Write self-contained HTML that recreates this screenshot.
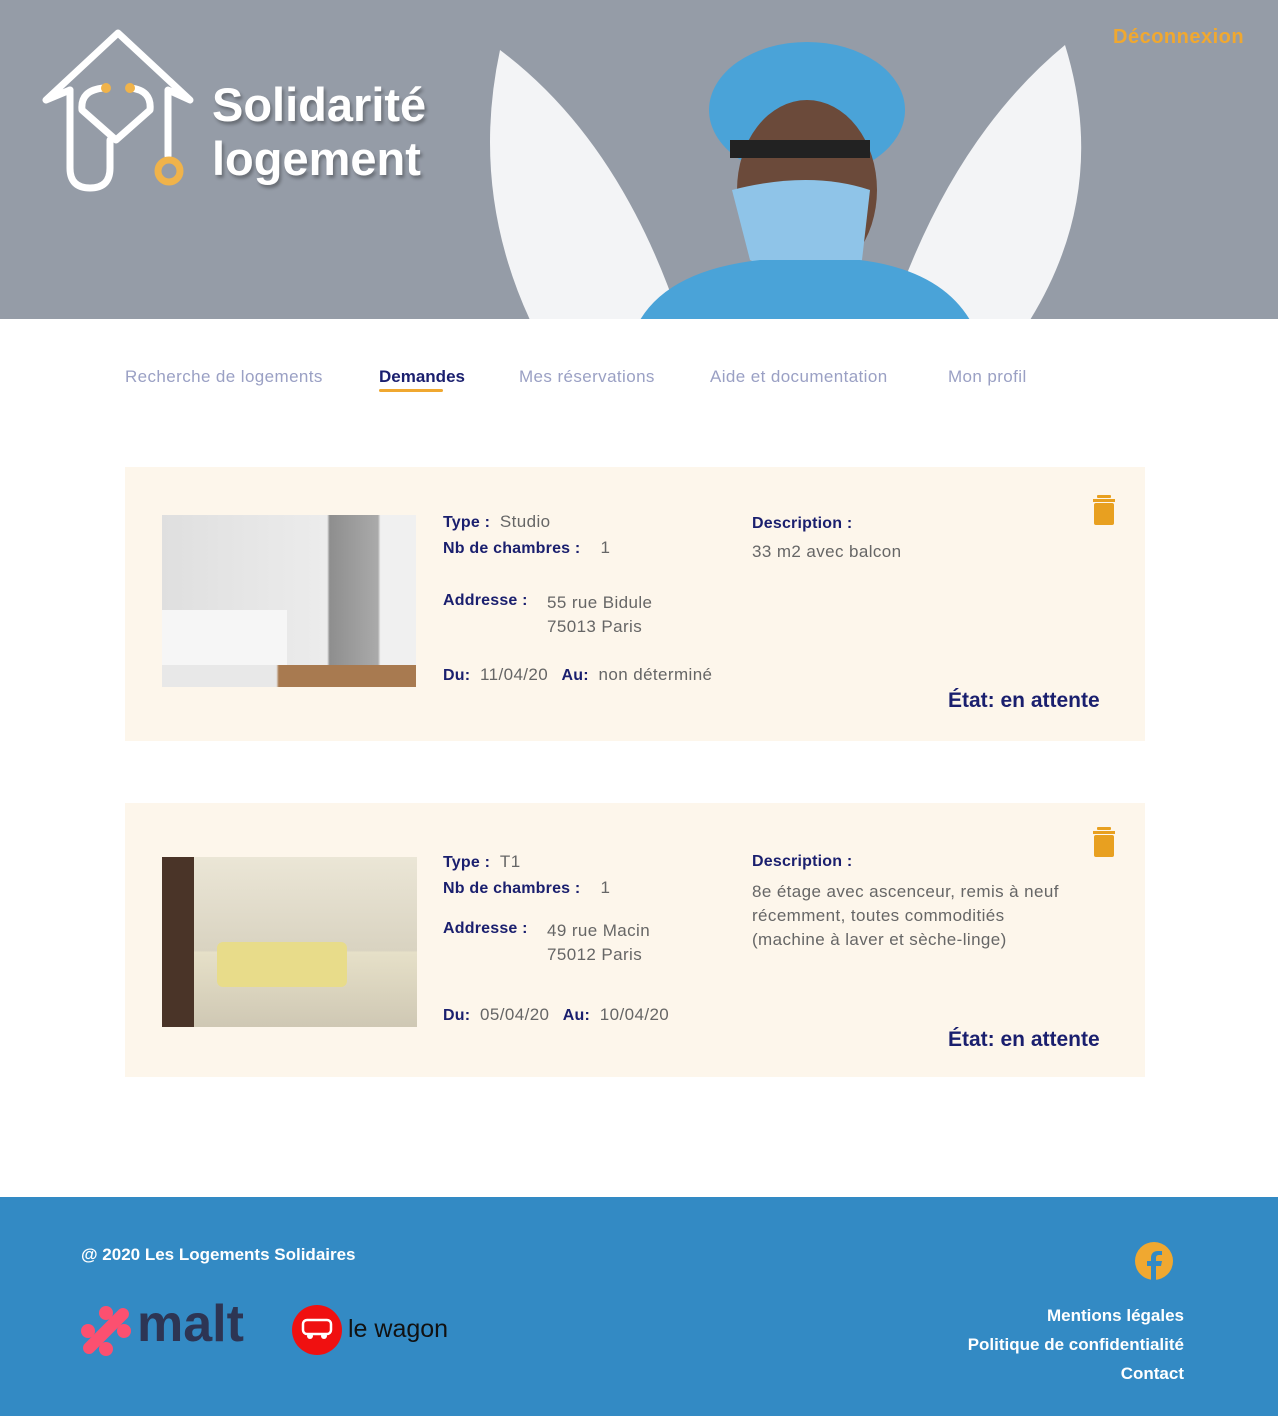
<!DOCTYPE html>
<html><head><meta charset="utf-8"><style>
*{margin:0;padding:0;box-sizing:border-box}
body{width:1278px;height:1416px;position:relative;font-family:"Liberation Sans",sans-serif;background:#fff;overflow:hidden}
.a{position:absolute;white-space:nowrap}
.hdr{position:absolute;left:0;top:0;width:1278px;height:319px;background:#959ca7;overflow:hidden}
.nav{font-size:17px;letter-spacing:0.4px;color:#9aa0c4;top:367px}
.card{position:absolute;left:125px;width:1020px;background:#fdf6eb}
.l{color:#1a1f6e;font-weight:bold;font-size:16px;letter-spacing:0.2px}
.v{color:#666;font-size:17px;font-weight:normal;letter-spacing:0.4px}
.st{color:#1a1f6e;font-weight:bold;font-size:21px}
.trash{position:absolute;width:22px;height:30px}
.ft{position:absolute;left:0;top:1197px;width:1278px;height:219px;background:#338ac4}
.fw{color:#fff;font-weight:bold;font-size:17px}
</style></head><body>
<div class="hdr">
<svg class="a" style="left:40px;top:28px" width="160" height="170" viewBox="0 0 160 170">
<g fill="none" stroke="#fff" stroke-width="7" stroke-linejoin="round" stroke-linecap="round">
<path d="M30 62 L6 72 L78 5 L150 72 L128 62 L128 128"/>
<path d="M30 62 L30 140 Q30 160 50 160 Q70 160 70 140 L70 112"/>
<path d="M64 60 Q40 62 42 82 L76 112 L110 82 Q112 62 90 60"/>
</g>
<circle cx="66" cy="60" r="5" fill="#f0b34a"/><circle cx="90" cy="60" r="5" fill="#f0b34a"/>
<circle cx="129" cy="143" r="11" fill="none" stroke="#f0b34a" stroke-width="7"/>
</svg>
<div class="a" style="left:212px;top:78px;color:#fff;font-weight:bold;font-size:47px;line-height:54px;letter-spacing:0px;text-shadow:2px 3px 3px rgba(0,0,0,.3)">Solidarité<br>logement</div>
<svg class="a" style="left:470px;top:40px" width="630" height="280" viewBox="0 0 630 280">
<path d="M30 10 Q150 100 210 280 L60 280 Q0 150 30 10Z" fill="#f3f4f6"/>
<path d="M595 5 Q480 100 420 280 L560 280 Q640 150 595 5Z" fill="#f3f4f6"/>
<ellipse cx="337" cy="70" rx="98" ry="68" fill="#4aa3d8"/>
<ellipse cx="337" cy="150" rx="70" ry="90" fill="#6b4a3a"/>
<path d="M262 150 Q340 130 400 150 L392 220 Q340 250 280 220Z" fill="#8fc4e8"/>
<rect x="260" y="100" width="140" height="18" fill="#222"/>
<path d="M170 280 Q200 230 290 220 L390 220 Q470 230 500 280Z" fill="#4aa3d8"/>
</svg>
<div class="a" style="left:1113px;top:26px;color:#f0a830;font-weight:bold;font-size:20px;letter-spacing:0.5px">Déconnexion</div>
</div>
<div class="a nav" style="left:125px">Recherche de logements</div>
<div class="a nav" style="left:379px;color:#1a1f6e;font-weight:bold;letter-spacing:0">Demandes</div>
<div class="a" style="left:379px;top:389px;width:64px;height:3px;background:#f0a830;border-radius:2px"></div>
<div class="a nav" style="left:519px">Mes réservations</div>
<div class="a nav" style="left:710px">Aide et documentation</div>
<div class="a nav" style="left:948px">Mon profil</div>

<div class="card" style="top:467px;height:274px"></div>
<div class="a" style="left:162px;top:515px;width:254px;height:172px;background:linear-gradient(90deg,#dfdfdf 0,#ececec 65%,#8e8e8e 66%,#aaa 85%,#f0f0f0 86%)"><div class="a" style="left:0;top:95px;width:125px;height:77px;background:#f6f6f6"></div><div class="a" style="left:0;top:150px;width:254px;height:22px;background:linear-gradient(90deg,#e8e8e8 0,#e8e8e8 45%,#a87a50 46%)"></div></div>
<div class="a l" style="left:443px;top:512px">Type : <span class="v">&nbsp;Studio</span></div>
<div class="a l" style="left:443px;top:538px">Nb de chambres : <span class="v">&nbsp;&nbsp;&nbsp;1</span></div>
<div class="a l" style="left:443px;top:592px">Addresse :</div>
<div class="a v" style="left:547px;top:591px;line-height:24px">55 rue Bidule<br>75013 Paris</div>
<div class="a l" style="left:443px;top:665px">Du: <span class="v">&nbsp;11/04/20</span> &nbsp; Au: <span class="v">&nbsp;non déterminé</span></div>
<div class="a l" style="left:752px;top:515px">Description :</div>
<div class="a v" style="left:752px;top:542px">33 m2 avec balcon</div>
<div class="a st" style="left:948px;top:689px">État: en attente</div>
<svg class="trash" style="left:1093px;top:495px" viewBox="0 0 22 30"><rect x="4" y="0" width="14" height="3" rx="1" fill="#e8a020"/><rect x="0" y="4" width="22" height="3" fill="#e8a020"/><rect x="1" y="8" width="20" height="22" rx="2" fill="#e8a020"/></svg>

<div class="card" style="top:803px;height:274px"></div>
<div class="a" style="left:162px;top:857px;width:255px;height:170px;background:linear-gradient(180deg,#ebe6d6 0,#d9d3c1 55%,#e6e0c8 56%,#cfc8b4 100%)"><div class="a" style="left:0;top:0;width:32px;height:170px;background:#4a3428"></div><div class="a" style="left:55px;top:85px;width:130px;height:45px;background:#e8dc8a;border-radius:6px"></div></div>
<div class="a l" style="left:443px;top:852px">Type : <span class="v">&nbsp;T1</span></div>
<div class="a l" style="left:443px;top:878px">Nb de chambres : <span class="v">&nbsp;&nbsp;&nbsp;1</span></div>
<div class="a l" style="left:443px;top:920px">Addresse :</div>
<div class="a v" style="left:547px;top:919px;line-height:24px">49 rue Macin<br>75012 Paris</div>
<div class="a l" style="left:443px;top:1005px">Du: <span class="v">&nbsp;05/04/20</span> &nbsp; Au: <span class="v">&nbsp;10/04/20</span></div>
<div class="a l" style="left:752px;top:853px">Description :</div>
<div class="a v" style="left:752px;top:880px;line-height:24px">8e étage avec ascenceur, remis à neuf<br>récemment, toutes commoditiés<br>(machine à laver et sèche-linge)</div>
<div class="a st" style="left:948px;top:1028px">État: en attente</div>
<svg class="trash" style="left:1093px;top:827px" viewBox="0 0 22 30"><rect x="4" y="0" width="14" height="3" rx="1" fill="#e8a020"/><rect x="0" y="4" width="22" height="3" fill="#e8a020"/><rect x="1" y="8" width="20" height="22" rx="2" fill="#e8a020"/></svg>

<div class="ft"></div>
<div class="a fw" style="left:81px;top:1245px">@ 2020 Les Logements Solidaires</div>
<svg class="a" style="left:80px;top:1305px" width="52" height="52" viewBox="0 0 52 52"><g fill="#fc5070"><circle cx="26" cy="8" r="7"/><circle cx="26" cy="44" r="7"/><circle cx="8" cy="26" r="7"/><circle cx="44" cy="26" r="7"/><rect x="20" y="-4" width="12" height="60" rx="6" transform="rotate(45 26 26)"/></g></svg>
<div class="a" style="left:137px;top:1294px;color:#2d3554;font-weight:bold;font-size:52px;letter-spacing:0px">malt</div>
<div class="a" style="left:292px;top:1305px;width:50px;height:50px;border-radius:50%;background:#f01010"></div>
<svg class="a" style="left:301px;top:1318px" width="32" height="24" viewBox="0 0 32 24"><rect x="2" y="2" width="28" height="14" rx="4" fill="none" stroke="#fff" stroke-width="2.5"/><circle cx="9" cy="18" r="3" fill="#fff"/><circle cx="23" cy="18" r="3" fill="#fff"/></svg>
<div class="a" style="left:348px;top:1315px;color:#111;font-size:25px">le wagon</div>
<svg class="a" style="left:1135px;top:1242px" width="38" height="38" viewBox="0 0 38 38"><circle cx="19" cy="19" r="19" fill="#f0a830"/><path d="M21 38V24h5l1-5h-6v-3c0-2 1-3 3-3h3V9h-4c-4 0-7 2-7 7v3h-4v5h4v14z" fill="#338ac4"/></svg>
<div class="a fw" style="right:94px;top:1301px;text-align:right;line-height:29px">Mentions légales<br>Politique de confidentialité<br>Contact</div>
</body></html>
